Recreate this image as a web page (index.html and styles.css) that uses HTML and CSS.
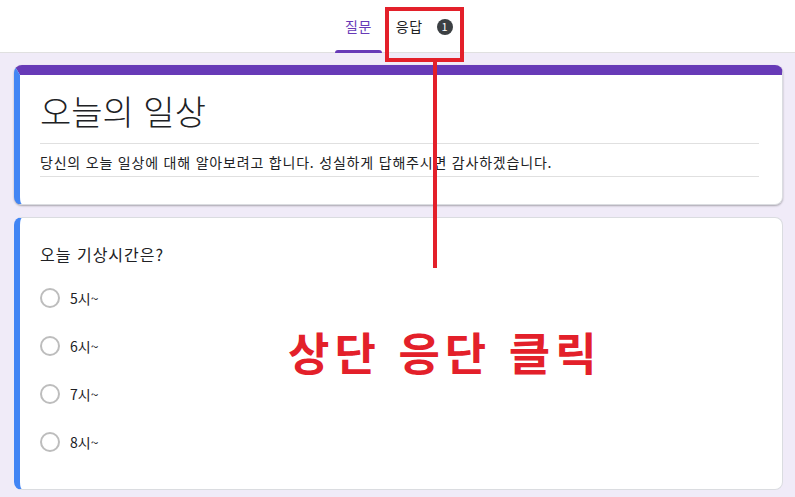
FILE: index.html
```html
<!DOCTYPE html>
<html lang="ko">
<head>
  <meta charset="UTF-8" />
  <title>오늘의 일상 - Google Forms</title>
  <link rel="stylesheet" href="styles.css">
</head>
<body>

<header class="topbar">
  <nav class="tabs">
    <a class="tab active">질문</a>
    <a class="tab">응답 <span class="badge">1</span></a>
  </nav>
</header>

<main class="form">
  <section class="card title-card">
    <h1>오늘의 일상</h1>
    <p class="desc">당신의 오늘 일상에 대해 알아보려고 합니다. 성실하게 답해주시면 감사하겠습니다.</p>
  </section>

  <section class="card question-card">
    <p class="question">오늘 기상시간은?</p>
    <ul class="options">
      <li><span class="radio"></span>5시~</li>
      <li><span class="radio"></span>6시~</li>
      <li><span class="radio"></span>7시~</li>
      <li><span class="radio"></span>8시~</li>
    </ul>
  </section>
</main>

<!-- annotation drawn over the screenshot -->
<div class="mark-box"></div>
<div class="mark-line"></div>
<div class="mark-text">상단 응단 클릭</div>

</body>
</html>
```

FILE: styles.css
```css
* { box-sizing: border-box; margin: 0; padding: 0; }

body {
  font-family: "Noto Sans CJK KR", "Noto Sans", sans-serif;
  background: #f0ebf8;
  color: #202124;
  width: 795px;
  height: 497px;
  overflow: hidden;
  position: relative;
}

.topbar {
  background: #fff;
  height: 53px;
  border-bottom: 1px solid #e0e0e0;
  display: flex;
  padding-left: 335px;
}

.tabs {
  display: flex;
  align-items: stretch;
  gap: 4px;
}

.tab {
  display: flex;
  align-items: center;
  padding: 0 10px;
  font-size: 14px;
  letter-spacing: 0.5px;
  color: #202124;
  position: relative;
}

.tab.active {
  color: #673ab7;
}

.tab.active::after {
  content: "";
  position: absolute;
  left: 0;
  right: 0;
  bottom: -1px;
  height: 3px;
  background: #673ab7;
  border-radius: 3px 3px 0 0;
}

.badge {
  display: inline-flex;
  align-items: center;
  justify-content: center;
  width: 16px;
  height: 16px;
  margin-left: 14px;
  margin-top: 1px;
  border-radius: 50%;
  background: #3c4043;
  color: #fff;
  font-size: 11px;
  letter-spacing: 0;
  line-height: 1;
}

.form {
  padding: 12px 12px 0 14px;
  width: 795px;
  display: flex;
  flex-direction: column;
  gap: 12px;
}

.card {
  background: #fff;
  border-radius: 8px;
  border: 1px solid #dadce0;
  border-left: 6px solid #4285f4;
  width: 769px;
}

.title-card {
  border-top: 10px solid #673ab7;
  height: 140px;
  padding: 13px 23px 0 20px;
  box-shadow: 0 1px 2px rgba(0, 0, 0, 0.3);
}

.title-card h1 {
  font-weight: 300;
  font-size: 34px;
  line-height: 46px;
  padding-bottom: 9px;
  border-bottom: 1px solid #e0e0e0;
}

.desc {
  font-size: 14px;
  line-height: 20px;
  letter-spacing: 0.8px;
  padding: 8px 0 4px;
  border-bottom: 1px solid #e0e0e0;
}

.question-card {
  height: 273px;
  padding: 24px 20px 0 20px;
}

.question {
  font-size: 16px;
  line-height: 24px;
  letter-spacing: 1px;
  margin-bottom: 8px;
}

.options {
  list-style: none;
}

.options li {
  display: flex;
  align-items: center;
  gap: 10px;
  height: 48px;
  font-size: 14px;
  color: #202124;
}

.radio {
  width: 20px;
  height: 20px;
  border: 2px solid #bdbdbd;
  border-radius: 50%;
}

.mark-box {
  position: absolute;
  left: 385px;
  top: 7px;
  width: 79px;
  height: 55px;
  border: 4px solid #e3202a;
}

.mark-line {
  position: absolute;
  left: 433px;
  top: 61px;
  width: 4px;
  height: 207px;
  background: #e3202a;
}

.mark-text {
  position: absolute;
  left: 288px;
  top: 320px;
  font-size: 45px;
  font-weight: 700;
  letter-spacing: 5px;
  color: #e3202a;
  line-height: 64px;
}
```
